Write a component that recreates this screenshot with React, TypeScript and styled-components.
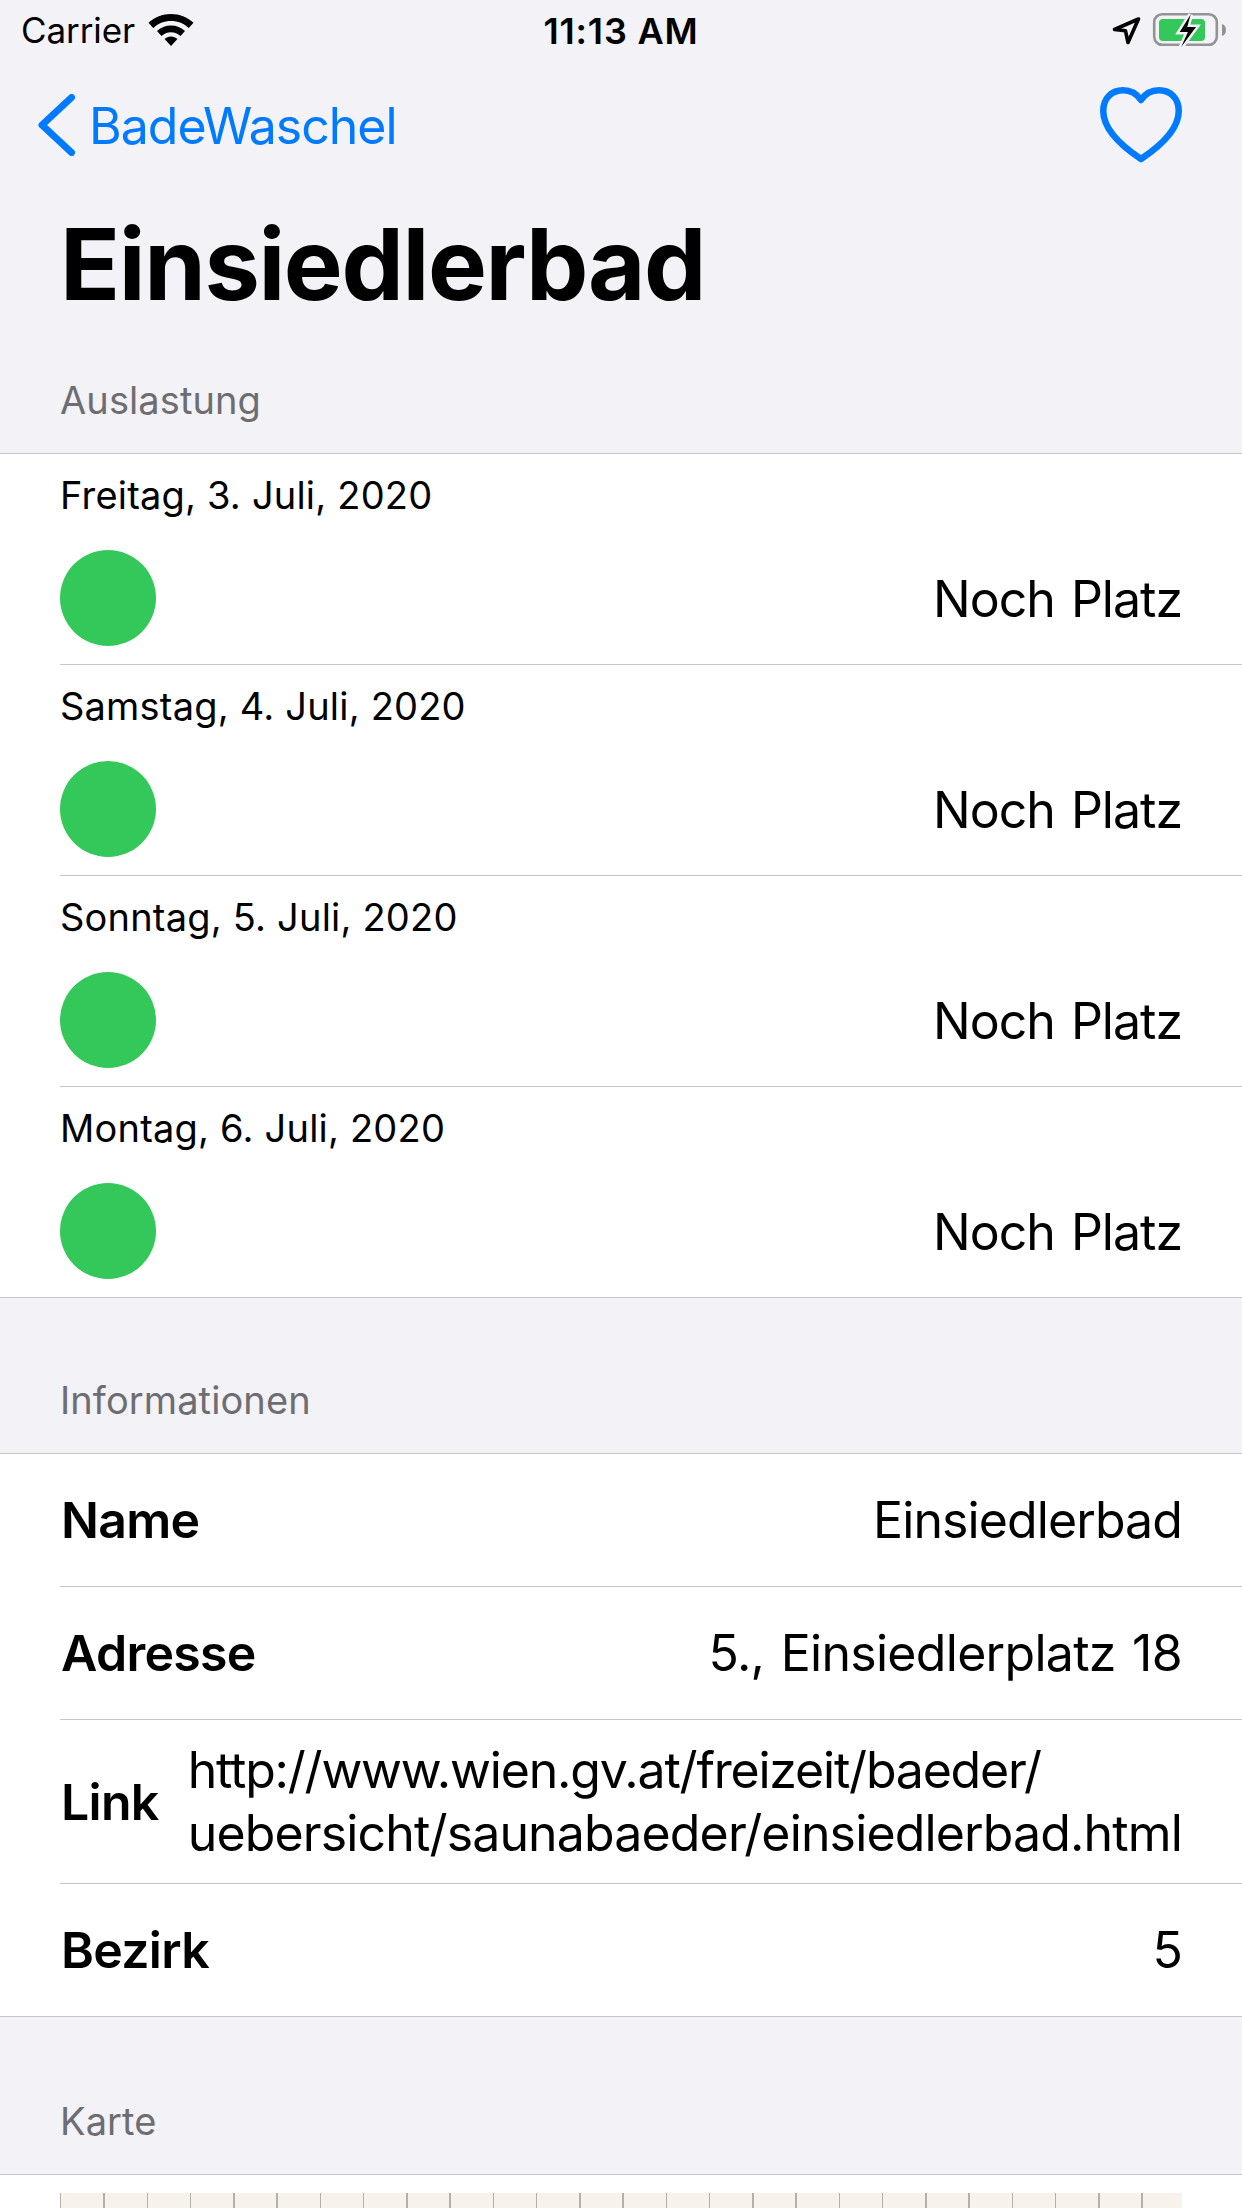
import React from 'react'
import styled, { createGlobalStyle } from 'styled-components'

const COLORS = {
  background: '#f2f2f7',
  separator: '#c6c6c8',
  blue: '#007aff',
  green: '#34c759',
  muted: '#6d6d72',
}

const FONT = 'Inter, "Liberation Sans", sans-serif'

const GlobalStyle = createGlobalStyle`
  html, body {
    margin: 0;
    padding: 0;
    background: ${COLORS.background};
    font-family: ${FONT};
    color: #000;
  }
`

const Screen = styled.div`
  width: 1242px;
  height: 2208px;
  overflow: hidden;
  display: flex;
  flex-direction: column;
`

const StatusBar = styled.div`
  height: 60px;
  flex: none;
  display: grid;
  grid-template-columns: 1fr auto 1fr;
  align-items: center;
  padding: 0 14px 0 21px;
`

const StatusLeft = styled.div`
  display: flex;
  align-items: center;
  gap: 13px;
  font-size: 35px;
  letter-spacing: -0.1px;
`

const StatusTime = styled.div`
  font-size: 36px;
  font-weight: 600;
  letter-spacing: 0.8px;
  padding-top: 2px;
  margin-right: 7px;
`

const StatusRight = styled.div`
  display: flex;
  justify-content: flex-end;
  align-items: center;
  gap: 10px;
`

const NavBar = styled.div`
  height: 130px;
  flex: none;
  display: flex;
  align-items: center;
  justify-content: space-between;
  padding: 0 60px 0 38px;
  box-sizing: border-box;
`

const BackLink = styled.div`
  display: flex;
  align-items: center;
  gap: 13px;
  color: ${COLORS.blue};
  font-size: 50px;
  letter-spacing: -1px;
`

const BackLabel = styled.span`
  padding-top: 2px;
`

const LargeTitle = styled.h1`
  margin: 19px 0 0;
  height: 110px;
  flex: none;
  padding-left: 60px;
  font-size: 99px;
  line-height: 110px;
  font-weight: 700;
  letter-spacing: -1.4px;
`

const SectionHeader = styled.div<{ $height: number }>`
  height: ${props => props.$height}px;
  flex: none;
  box-sizing: border-box;
  display: flex;
  align-items: flex-end;
  padding: 0 60px 31px;
  font-size: 38px;
  line-height: 44px;
  color: ${COLORS.muted};
  letter-spacing: 0.1px;
`

const Group = styled.div`
  flex: none;
  background: #fff;
  border-top: 1px solid ${COLORS.separator};
  border-bottom: 1px solid ${COLORS.separator};
`

const LoadRow = styled.div`
  height: 211px;
  box-sizing: border-box;
  margin-left: 60px;
  padding: 19px 60px 0 0;
  border-bottom: 1px solid ${COLORS.separator};

  &:last-child {
    height: 210px;
    border-bottom: none;
  }
`

const LoadDate = styled.div`
  font-size: 38px;
  line-height: 44px;
  letter-spacing: 0.2px;
`

const LoadStatus = styled.div`
  margin-top: 33px;
  display: flex;
  align-items: center;
  justify-content: space-between;
  font-size: 50px;
  letter-spacing: -1px;
  word-spacing: 3px;
`

const StatusText = styled.span`
  padding-top: 2px;
`

const Dot = styled.div`
  width: 96px;
  height: 96px;
  border-radius: 50%;
  background: ${COLORS.green};
`

const InfoRow = styled.div<{ $height: number }>`
  height: ${props => props.$height}px;
  box-sizing: border-box;
  margin-left: 60px;
  padding-right: 60px;
  display: flex;
  align-items: center;
  justify-content: space-between;
  gap: 28px;
  border-bottom: 1px solid ${COLORS.separator};

  &:last-child {
    border-bottom: none;
  }
`

const InfoLabel = styled.div`
  margin-left: 1px;
  font-size: 50px;
  font-weight: 600;
  letter-spacing: -0.7px;
  flex: none;
`

const InfoValue = styled.div<{ $spacing?: number }>`
  font-size: 50px;
  line-height: 63px;
  letter-spacing: ${props => props.$spacing ?? -0.9}px;
  word-spacing: 3px;
  text-align: right;
`

const LinkValue = styled(InfoValue)`
  text-align: left;
  white-space: nowrap;
`

const LinkLine = styled.div<{ $spacing: number }>`
  letter-spacing: ${props => props.$spacing}px;
`

const MapPanel = styled.div`
  flex: 1;
  background: #fff;
  border-top: 1px solid ${COLORS.separator};
  padding: 18px 60px 0;
`

const MapTiles = styled.div`
  height: 100px;
  background-color: #f7f3eb;
  background-image: repeating-linear-gradient(
    to right,
    #b5b1a6 0,
    #b5b1a6 1.5px,
    transparent 1.5px,
    transparent 43.26px
  );
`

const WifiIcon = () => (
  <svg width="46" height="34" viewBox="0 0 46 34">
    <path d="M23 1C14.500 1 6.800 4.200 0.500 9.800l4.700 5.200C10 10.600 16 8 23 8s13 2.600 17.800 7l4.700-5.200C39.200 4.200 31.500 1 23 1z" fill="#000" />
    <path d="M23 12.500c-5.500 0-10.300 2-14 5.600l4.500 4.900c2.500-2.300 5.800-3.700 9.500-3.700s7 1.400 9.500 3.700l4.500-4.900c-3.700-3.600-8.500-5.600-14-5.600z" fill="#000" />
    <path d="M23 23.500c-2.600 0-4.800.9-6.400 2.400L23 33l6.400-7.100c-1.600-1.500-3.800-2.400-6.400-2.400z" fill="#000" />
  </svg>
)

const LocationIcon = () => (
  <svg width="32" height="32" viewBox="0 0 32 32">
    <path d="M28.500 5 4.500 15.500l11 1.300L18 28.500z" fill="none" stroke="#000" strokeWidth="3.600" strokeLinejoin="round" />
  </svg>
)

const BatteryIcon = () => (
  <svg width="76" height="36" viewBox="0 0 76 36">
    <rect x="2.200" y="2.200" width="62.600" height="30.600" rx="8" fill="none" stroke="#949494" strokeWidth="2.600" />
    <rect x="7" y="7" width="46" height="22" rx="4" fill={COLORS.green} />
    <path d="M70 12c2.500.5 4 2.800 4 6s-1.500 5.500-4 6z" fill="#949494" />
    <path
      d="M38.700 2.500 27.700 20h8.200L29.200 35 44 15h-8.800z"
      fill="#000"
      stroke={COLORS.background}
      strokeWidth="5"
      paintOrder="stroke"
    />
  </svg>
)

const BackChevron = () => (
  <svg width="38" height="62" viewBox="0 0 38 62">
    <path d="M33.500 3.500 4 31l29.500 27.500" fill="none" stroke={COLORS.blue} strokeWidth="7" strokeLinecap="round" strokeLinejoin="round" />
  </svg>
)

const HeartIcon = () => (
  <svg width="82" height="76" viewBox="0 0 82 76">
    <path
      d="M41 72C29 64 3.250 46 3.250 24 3.250 11 12 3.250 23 3.250 31 3.250 37 7 41 13 45 7 51 3.250 59 3.250 70 3.250 78.750 11 78.750 24 78.750 46 53 64 41 72z"
      fill="none"
      stroke={COLORS.blue}
      strokeWidth="6.500"
      strokeLinejoin="round"
    />
  </svg>
)

const DAYS = ['Freitag, 3. Juli, 2020', 'Samstag, 4. Juli, 2020', 'Sonntag, 5. Juli, 2020', 'Montag, 6. Juli, 2020']

export default function App() {
  return (
    <Screen>
      <GlobalStyle />
      <StatusBar>
        <StatusLeft>
          Carrier
          <WifiIcon />
        </StatusLeft>
        <StatusTime>11:13 AM</StatusTime>
        <StatusRight>
          <LocationIcon />
          <BatteryIcon />
        </StatusRight>
      </StatusBar>
      <NavBar>
        <BackLink>
          <BackChevron />
          <BackLabel>BadeWaschel</BackLabel>
        </BackLink>
        <HeartIcon />
      </NavBar>
      <LargeTitle>Einsiedlerbad</LargeTitle>
      <SectionHeader $height={134}>Auslastung</SectionHeader>
      <Group>
        {DAYS.map(day => (
          <LoadRow key={day}>
            <LoadDate>{day}</LoadDate>
            <LoadStatus>
              <Dot />
              <StatusText>Noch Platz</StatusText>
            </LoadStatus>
          </LoadRow>
        ))}
      </Group>
      <SectionHeader $height={155}>Informationen</SectionHeader>
      <Group>
        <InfoRow $height={133}>
          <InfoLabel>Name</InfoLabel>
          <InfoValue>Einsiedlerbad</InfoValue>
        </InfoRow>
        <InfoRow $height={133}>
          <InfoLabel>Adresse</InfoLabel>
          <InfoValue $spacing={-0.7}>5., Einsiedlerplatz 18</InfoValue>
        </InfoRow>
        <InfoRow $height={164}>
          <InfoLabel>Link</InfoLabel>
          <LinkValue>
            <LinkLine $spacing={-1.2}>http://www.wien.gv.at/freizeit/baeder/</LinkLine>
            <LinkLine $spacing={-0.85}>uebersicht/saunabaeder/einsiedlerbad.html</LinkLine>
          </LinkValue>
        </InfoRow>
        <InfoRow $height={132}>
          <InfoLabel>Bezirk</InfoLabel>
          <InfoValue>5</InfoValue>
        </InfoRow>
      </Group>
      <SectionHeader $height={157}>Karte</SectionHeader>
      <MapPanel>
        <MapTiles />
      </MapPanel>
    </Screen>
  )
}
